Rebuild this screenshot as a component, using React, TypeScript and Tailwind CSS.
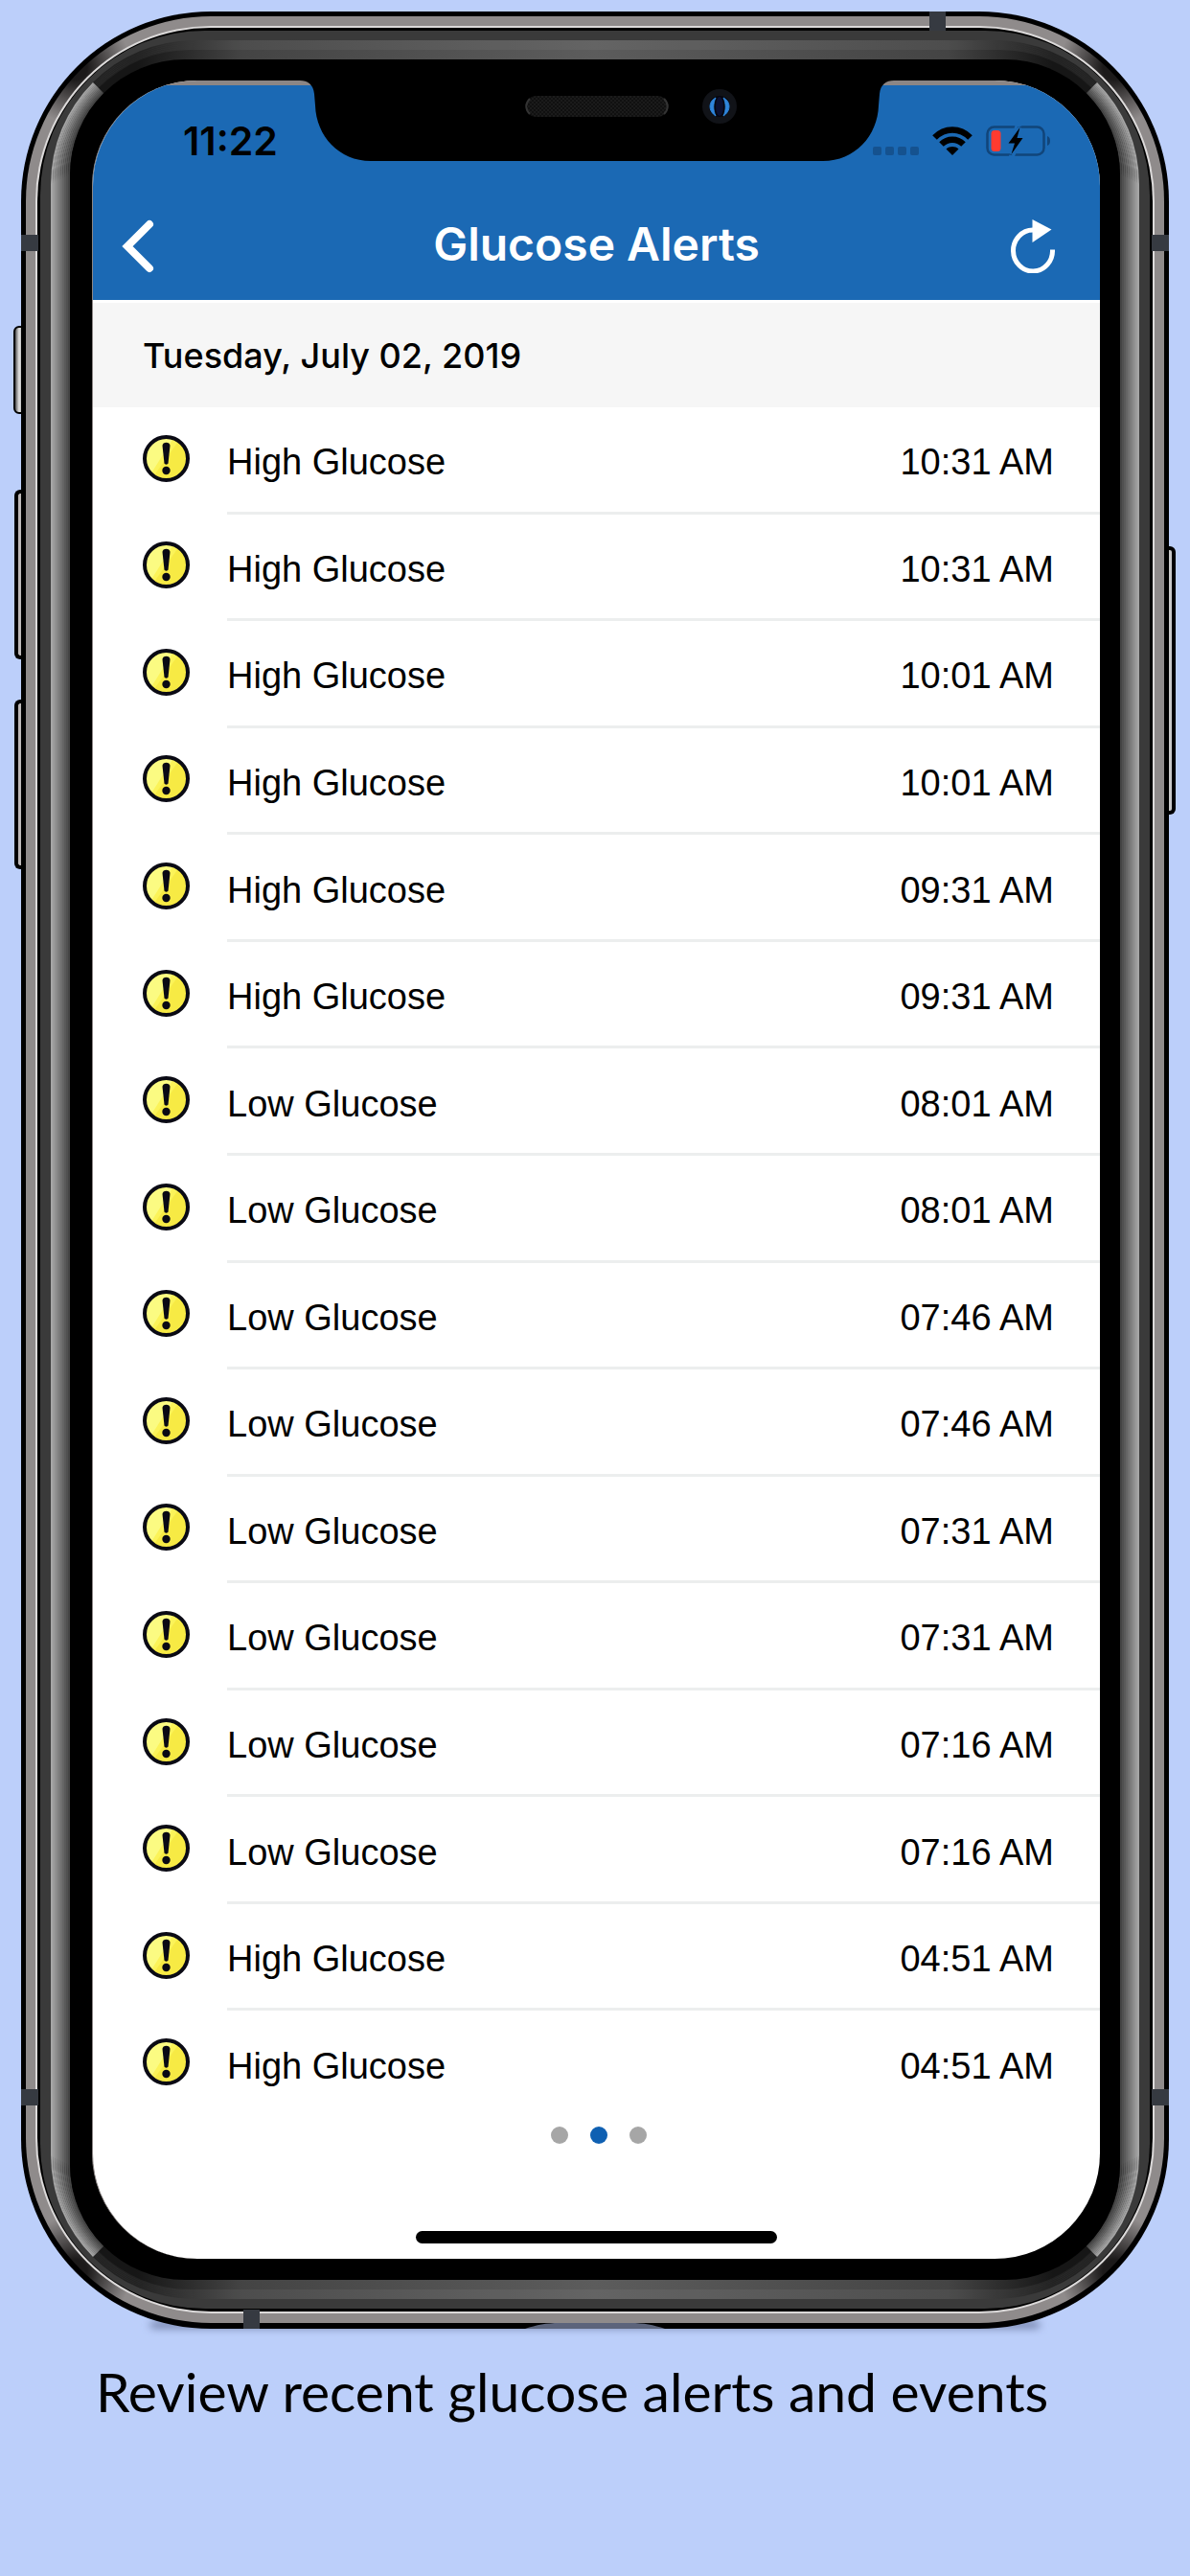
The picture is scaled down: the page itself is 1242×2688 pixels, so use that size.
import type { ReactNode } from "react";

type Alert = { label: string; time: string };

const alerts: Alert[] = [
  { label: "High Glucose", time: "10:31 AM" },
  { label: "High Glucose", time: "10:31 AM" },
  { label: "High Glucose", time: "10:01 AM" },
  { label: "High Glucose", time: "10:01 AM" },
  { label: "High Glucose", time: "09:31 AM" },
  { label: "High Glucose", time: "09:31 AM" },
  { label: "Low Glucose", time: "08:01 AM" },
  { label: "Low Glucose", time: "08:01 AM" },
  { label: "Low Glucose", time: "07:46 AM" },
  { label: "Low Glucose", time: "07:46 AM" },
  { label: "Low Glucose", time: "07:31 AM" },
  { label: "Low Glucose", time: "07:31 AM" },
  { label: "Low Glucose", time: "07:16 AM" },
  { label: "Low Glucose", time: "07:16 AM" },
  { label: "High Glucose", time: "04:51 AM" },
  { label: "High Glucose", time: "04:51 AM" },
];

// Polished bevel between the metal frame and the glass, outermost ring first.
const bevelRings = [
  "rounded-[150px] border-x-[#a6a6a6] border-y-white/5",
  "rounded-[147px] border-x-[#9c9c9c] border-y-white/5",
  "rounded-[144px] border-x-[#919191] border-y-white/5",
  "rounded-[141px] border-x-[#868686] border-y-white/5",
  "rounded-[138px] border-x-[#7b7b7b] border-y-white/5",
  "rounded-[135px] border-x-[#707070] border-y-transparent",
  "rounded-[132px] border-x-[#656565] border-y-transparent",
  "rounded-[129px] border-x-[#5a5a5a] border-y-transparent",
  "rounded-[126px] border-x-[#505050] border-y-transparent",
  "rounded-[123px] border-x-[#454545] border-y-transparent",
];

function Bevel({ children }: { children: ReactNode }) {
  return bevelRings.reduceRight<ReactNode>(
    (inner, ring) => <div className={`border-2 ${ring}`}>{inner}</div>,
    children,
  );
}

function SideButtons() {
  return (
    <div aria-hidden="true">
      <div className="absolute -left-2 top-[328px] h-[92px] w-5 rounded-l-md border-2 border-black bg-[linear-gradient(to_right,#555,#e5e5e5_4px,#999_8px)]" />
      <div className="absolute -left-[7px] top-[499px] h-[177px] w-5 rounded-l-md border-y-4 border-l-4 border-black bg-[#bdb9b9]" />
      <div className="absolute -left-[7px] top-[718px] h-[177px] w-5 rounded-l-md border-y-4 border-l-4 border-black bg-[#bdb9b9]" />
      <div className="absolute -right-[7px] top-[558px] h-[280px] w-5 rounded-r-md border-y-4 border-r-4 border-black bg-[#c8c8c8]" />
    </div>
  );
}

function AntennaBands() {
  return (
    <div aria-hidden="true">
      <div className="absolute left-0 top-[233px] h-[17px] w-[18px] bg-[#363a41]" />
      <div className="absolute right-0 top-[233px] h-[17px] w-[18px] bg-[#363a41]" />
      <div className="absolute bottom-[233px] left-0 h-[17px] w-[18px] bg-[#363a41]" />
      <div className="absolute bottom-[233px] right-0 h-[17px] w-[18px] bg-[#363a41]" />
      <div className="absolute right-[233px] top-0 h-5 w-[17px] bg-[#363a41]" />
      <div className="absolute bottom-0 left-[232px] h-5 w-[17px] bg-[#363a41]" />
    </div>
  );
}

function PhoneFrame({ children }: { children: ReactNode }) {
  return (
    <div className="relative isolate">
      <div
        aria-hidden="true"
        className="absolute inset-x-[135px] bottom-px -z-10 h-1.5 rounded-full bg-[#65729a] blur-[4px]"
      />
      <SideButtons />
      <div className="relative rounded-[198px] bg-black px-[5px] pb-[6px] pt-[5px]">
        <div className="rounded-[193px] bg-[#8f8b8b] bg-[radial-gradient(circle_at_52px_54px,#1c1a1a_12px,transparent_58px),radial-gradient(circle_at_calc(100%-52px)_54px,#1c1a1a_12px,transparent_58px),radial-gradient(circle_at_52px_calc(100%-54px),#1c1a1a_12px,transparent_58px),radial-gradient(circle_at_calc(100%-52px)_calc(100%-54px),#1c1a1a_12px,transparent_58px)] p-[10px]">
          <div className="rounded-[183px] bg-[#dcdada] p-[2px]">
            <div className="rounded-[181px] bg-black p-[3px]">
              <div className="rounded-[172px] bg-[#3a3a3a] px-[11px] pb-[10px] pt-[10px]">
                <div className="rounded-[150px] bg-[linear-gradient(to_right,#161616_90px,#444_200px,#5c5c5c_50%,#444_calc(100%-200px),#161616_calc(100%-90px))]">
                  <Bevel>
                    <div className="rounded-[120px] bg-black pb-[22px] pl-[23px] pr-[21px] pt-[22px]">
                      {children}
                    </div>
                  </Bevel>
                </div>
              </div>
            </div>
          </div>
        </div>
        <AntennaBands />
        <svg
          aria-hidden="true"
          viewBox="0 0 146 6"
          className="absolute bottom-0 left-[526px] h-[6px] w-[146px]"
        >
          <path d="M0 6C12 2 22 0 36 0H110C124 0 134 2 146 6Z" fill="#5c647b" />
        </svg>
      </div>
    </div>
  );
}

function Notch() {
  return (
    <svg
      aria-hidden="true"
      viewBox="0 0 620 84"
      className="absolute left-1/2 top-0 h-[84px] w-[620px] -translate-x-1/2"
    >
      <defs>
        <pattern id="mesh" width="4" height="4" patternUnits="userSpaceOnUse">
          <rect width="4" height="4" fill="#101010" />
          <circle cx="1" cy="1" r="1" fill="#1e1e1e" />
          <circle cx="3" cy="3" r="1" fill="#1e1e1e" />
        </pattern>
      </defs>
      <path
        d="M0 0C8 0 14 4 15 14L16 26C17 58 41 84 74 84H546C579 84 603 58 604 26L605 14C606 4 612 0 620 0Z"
        fill="#000"
      />
      <rect x="236" y="16" width="148" height="22" rx="11" fill="url(#mesh)" />
      <path d="M240 19C235 24 235 30 240 35M380 19C385 24 385 30 380 35" stroke="#333" strokeWidth="2" fill="none" />
      <circle cx="438" cy="27" r="18" fill="#111318" />
      <circle cx="438" cy="27" r="11" fill="#05060f" />
      <path d="M434 18C426 22 426 32 434 37C431 31 431 24 434 18Z" fill="#2f86dc" stroke="#2f86dc" strokeWidth="1" />
      <path d="M442 18C450 22 450 32 442 37C445 31 445 24 442 18Z" fill="#2f86dc" stroke="#2f86dc" strokeWidth="1" />
      <ellipse cx="438" cy="27" rx="4" ry="10" fill="#0b1030" />
    </svg>
  );
}

function StatusIcons() {
  return (
    <div className="flex items-center">
      <svg viewBox="0 0 48 9" className="mr-[14px] mt-5 h-[9px] w-12" aria-label="No cellular signal" role="img">
        <g fill="#15528f">
          <rect x="0" width="9" height="9" rx="2" />
          <rect x="13" width="9" height="9" rx="2" />
          <rect x="26" width="9" height="9" rx="2" />
          <rect x="39" width="9" height="9" rx="2" />
        </g>
      </svg>
      <svg viewBox="0 0 42 30" className="mr-[14px] h-[30px] w-[42px]" aria-label="Wi-Fi" role="img">
        <g fill="none" stroke="#000" strokeWidth="6.500">
          <path d="M2.500 11.500C13 .8 29 .8 39.500 11.500" />
          <path d="M9.500 18.500C16 12.200 26 12.200 32.500 18.500" />
        </g>
        <path d="M14.500 23.500C18.500 20.300 23.500 20.300 27.500 23.500L21 30Z" />
      </svg>
      <svg viewBox="0 0 68 32" className="h-8 w-[68px]" aria-label="Battery low, charging" role="img">
        <rect x="1.500" y="1.500" width="59" height="29" rx="7" fill="none" stroke="#11457a" strokeWidth="2.500" />
        <rect x="5.500" y="5" width="10" height="22" rx="3.500" fill="#ff3b30" />
        <path d="M64 11C68 12 68 20 64 21Z" fill="#11457a" />
        <path d="M37 -1L32 0L30 6M24 32L28 33L31 26" fill="none" stroke="#1b69b4" strokeWidth="3" />
        <path d="M35.500 2L23.500 18.500H30L26.500 30L38.500 13H32.500Z" fill="#000" stroke="#1b69b4" strokeWidth="3" paintOrder="stroke" />
      </svg>
    </div>
  );
}

function WarningIcon() {
  return (
    <svg viewBox="0 0 49 49" className="mb-[5px] size-[49px] shrink-0" aria-hidden="true">
      <defs>
        <clipPath id="disc">
          <circle cx="24.500" cy="24.500" r="21" />
        </clipPath>
      </defs>
      <circle cx="24.500" cy="24.500" r="22.500" fill="#fbf359" />
      <g clipPath="url(#disc)">
        <path d="M0 0H34L10 38H0Z" fill="#fbfb82" />
        <path d="M36 8L49 8V40L16 49L12 42Z" fill="#f7ea44" />
      </g>
      <circle cx="24.500" cy="24.500" r="22.500" fill="none" stroke="#0a0a14" strokeWidth="4" />
      <path d="M20.500 11C20.500 6.500 28.500 6.500 28.500 11L26.500 29.500C26 31 23 31 22.500 29.500Z" fill="#0a0a14" />
      <circle cx="24.500" cy="37" r="4.200" fill="#0a0a14" />
    </svg>
  );
}

function AppHeader() {
  return (
    <header className="bg-[linear-gradient(#8c8685_5px,#1b69b4_5px)] pb-2 pt-[39px]">
      <div className="flex h-12 items-center justify-between pl-[94px] pr-[51px]">
        <span className="font-['Inter'] text-[41px] font-semibold leading-none text-black">11:22</span>
        <StatusIcons />
      </div>
      <div className="mt-[38px] grid h-24 grid-cols-[1fr_auto_1fr] items-center px-[30px]">
        <button type="button" aria-label="Back" className="justify-self-start">
          <svg viewBox="0 0 34 56" className="h-14 w-[34px]" fill="none">
            <path d="M29 5L6 28L29 51" stroke="#fff" strokeWidth="8" strokeLinecap="round" strokeLinejoin="miter" />
          </svg>
        </button>
        <h1 className="pb-1 font-['Inter'] text-[48px] font-semibold leading-none text-white">Glucose Alerts</h1>
        <button type="button" aria-label="Refresh" className="mr-4 justify-self-end">
          <svg viewBox="0 0 48 56" className="h-14 w-12" fill="none">
            <path d="M44.500 31.500A20.500 21.500 0 1 1 24 11" stroke="#fff" strokeWidth="5" />
            <path d="M23.500 0L43.500 10.500L23.500 24Z" fill="#fff" />
          </svg>
        </button>
      </div>
    </header>
  );
}

function AlertRow({ label, time }: Alert) {
  return (
    <li className="group flex items-center pl-[52px]">
      <WarningIcon />
      <div className="ml-[39px] flex flex-1 items-center justify-between self-stretch border-b-[3px] border-[#eceeee] pr-12 pt-1.5 font-['Liberation_Sans'] text-[38px] leading-none text-black group-last:border-transparent">
        <span>{label}</span>
        <time>{time}</time>
      </div>
    </li>
  );
}

export default function App() {
  return (
    <main className="min-h-screen bg-[#bccffa] px-[22px] pt-3 font-['Inter',sans-serif]">
      <PhoneFrame>
        <div className="overflow-hidden rounded-[110px] border-l border-l-[#8c8685] bg-white">
          <div className="relative">
            <AppHeader />
            <Notch />
          </div>
          <section className="pt-[3px]">
            <h2 className="flex h-[109px] items-center bg-[#f6f6f6] pl-[52px] text-[36px] font-medium leading-none text-black">
              Tuesday, July 02, 2019
            </h2>
            <ul className="grid min-h-[1785px] auto-rows-fr">
              {alerts.map((alert, index) => (
                <AlertRow key={index} {...alert} />
              ))}
            </ul>
          </section>
          <nav aria-label="Pages" className="flex justify-center gap-[23px] pl-1 pt-[9px]">
            <button type="button" aria-label="Page 1" className="size-[18px] rounded-full bg-[#a6a6a6]" />
            <button type="button" aria-label="Page 2" aria-current="page" className="size-[18px] rounded-full bg-[#0f60b2]" />
            <button type="button" aria-label="Page 3" className="size-[18px] rounded-full bg-[#a6a6a6]" />
          </nav>
          <div className="mx-auto mb-4 mt-[91px] h-[13px] w-[377px] rounded-full bg-black" />
        </div>
      </PhoneFrame>
      <p className="mt-6 pl-[78px] font-['Lato'] text-[57px] leading-[82px] text-black">
        Review recent glucose alerts and events
      </p>
    </main>
  );
}
